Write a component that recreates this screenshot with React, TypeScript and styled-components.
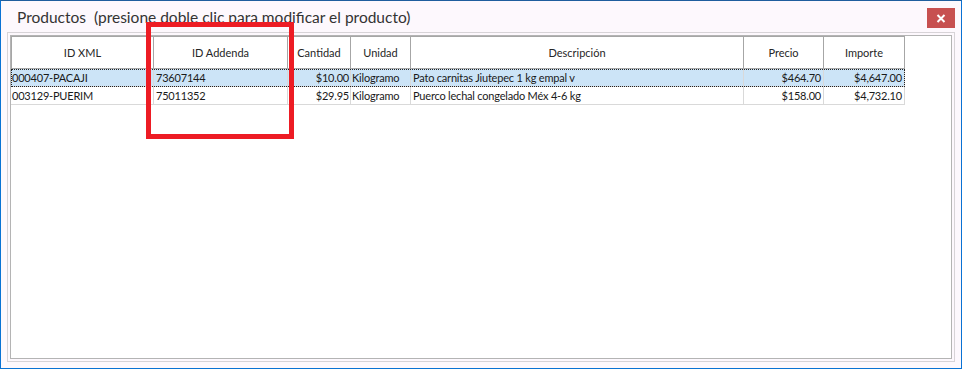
import React from "react";
import styled, { createGlobalStyle } from "styled-components";

const Global = createGlobalStyle`
  html, body {
    margin: 0;
    padding: 0;
    background: #fdf8fd;
  }
  body {
    font-family: "Segoe UI", Lato, "Liberation Sans", sans-serif;
  }
  * { box-sizing: border-box; }
`;

const Window = styled.div`
  position: relative;
  width: 962px;
  height: 369px;
  border: 1px solid #0a72d4;
  border-top-color: #1f5e9e;
  background: #fdf8fd;
  display: flex;
  flex-direction: column;
`;

const TitleBar = styled.div`
  height: 31px;
  display: flex;
  align-items: flex-start;
  justify-content: space-between;
  padding: 0 6px 0 16px;
`;

const Title = styled.div`
  font-family: Lato, "Liberation Sans", sans-serif;
  font-size: 15.5px;
  line-height: 18px;
  margin-top: 7px;
  color: #333333;
  white-space: pre;
`;

const CloseButton = styled.button`
  margin-top: 7px;
  width: 28px;
  height: 20px;
  border: none;
  padding: 0;
  background: #c75050;
  display: flex;
  align-items: center;
  justify-content: center;
`;

const GroupBox = styled.div`
  flex: 1;
  margin: 0 6px 6px 6px;
  border: 1px solid #d7d3d7;
  padding: 2px;
  display: flex;
`;

const Grid = styled.div`
  flex: 1;
  border: 1px solid #b4b4b4;
  background: #ffffff;
  display: flex;
  flex-direction: column;
  font-family: Lato, "Liberation Sans", sans-serif;
  font-size: 11px;
  color: #1a1a1a;
`;

const COLS = "143px 134px 63px 60px 333px 80px 81px";

const HeaderRow = styled.div`
  display: grid;
  grid-template-columns: ${COLS};
  width: 894px;
  height: 33px;
  border-top: 1px solid #a6a6a6;
`;

const HeaderCell = styled.div<{ $first?: boolean }>`
  display: flex;
  align-items: center;
  justify-content: center;
  border-right: 1px solid #a6a6a6;
  border-bottom: 1px solid #a6a6a6;
  border-left: ${(p) => (p.$first ? "1px solid #a6a6a6" : "none")};
  background: #ffffff;
  color: #262626;
  white-space: nowrap;
`;

const Row = styled.div<{ $selected?: boolean }>`
  display: grid;
  grid-template-columns: ${COLS};
  width: 894px;
  height: 18px;
  background: ${(p) => (p.$selected ? "#cce4f7" : "#ffffff")};
  outline: ${(p) => (p.$selected ? "1px dotted #222" : "none")};
  outline-offset: -1px;
`;

const Cell = styled.div<{ $align?: "left" | "right"; $pad?: number }>`
  display: flex;
  align-items: center;
  justify-content: ${(p) => (p.$align === "right" ? "flex-end" : "flex-start")};
  padding: ${(p) => (p.$align === "right" ? `0 ${p.$pad ?? 2}px 0 0` : `0 0 0 ${p.$pad ?? 2}px`)};
  border-right: 1px solid #d9d9d9;
  border-bottom: 1px solid #d9d9d9;
  white-space: nowrap;
  overflow: hidden;
  line-height: 17px;
  letter-spacing: -0.2px;
`;

const Highlight = styled.div`
  position: absolute;
  left: 145px;
  top: 21px;
  width: 148px;
  height: 117px;
  border: 5px solid #ed1c24;
  pointer-events: none;
`;

type Product = {
  idXml: string;
  idAddenda: string;
  cantidad: string;
  unidad: string;
  descripcion: string;
  precio: string;
  importe: string;
};

const products: Product[] = [
  {
    idXml: "000407-PACAJI",
    idAddenda: "73607144",
    cantidad: "$10.00",
    unidad: "Kilogramo",
    descripcion: "Pato carnitas Jiutepec 1 kg empal v",
    precio: "$464.70",
    importe: "$4,647.00",
  },
  {
    idXml: "003129-PUERIM",
    idAddenda: "75011352",
    cantidad: "$29.95",
    unidad: "Kilogramo",
    descripcion: "Puerco lechal congelado Méx 4-6 kg",
    precio: "$158.00",
    importe: "$4,732.10",
  },
];

const headers = ["ID XML", "ID Addenda", "Cantidad", "Unidad", "Descripción", "Precio", "Importe"];

export default function App() {
  return (
    <>
      <Global />
      <Window>
        <TitleBar>
          <Title>{"Productos  (presione doble clic para modificar el producto)"}</Title>
          <CloseButton aria-label="Cerrar">
            <svg width="10" height="9" viewBox="0 0 10 9">
              <path d="M1.5 1 L8.5 8 M8.5 1 L1.5 8" stroke="#fff" strokeWidth="2" />
            </svg>
          </CloseButton>
        </TitleBar>
        <GroupBox>
          <Grid>
            <HeaderRow>
              {headers.map((h, i) => (
                <HeaderCell key={h} $first={i === 0}>
                  {h}
                </HeaderCell>
              ))}
            </HeaderRow>
            {products.map((p, i) => (
              <Row key={p.idXml} $selected={i === 0}>
                <Cell $pad={1}>{p.idXml}</Cell>
                <Cell $pad={2}>{p.idAddenda}</Cell>
                <Cell $align="right" $pad={1}>{p.cantidad}</Cell>
                <Cell $pad={1}>{p.unidad}</Cell>
                <Cell $pad={2}>{p.descripcion}</Cell>
                <Cell $align="right" $pad={2}>{p.precio}</Cell>
                <Cell $align="right" $pad={2}>{p.importe}</Cell>
              </Row>
            ))}
          </Grid>
        </GroupBox>
        <Highlight />
      </Window>
    </>
  );
}
